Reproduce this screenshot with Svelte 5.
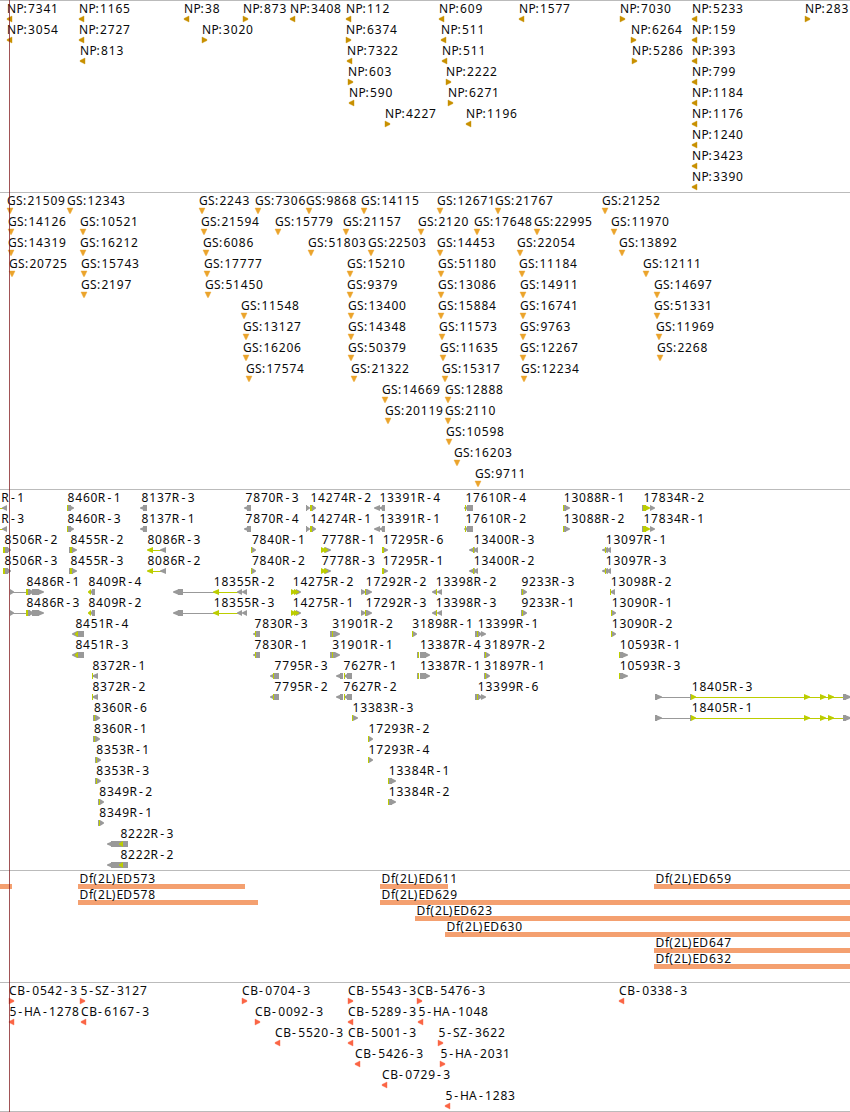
<script>
  const WIDTH = 850;
  const ROW = 21;

  const advance = {
    N: 9.4, P: 7.2, G: 9, S: 6.9, ':': 4.1, R: 8.1, D: 9.3, f: 4.3, '(': 4.5, ')': 4.6,
    L: 6.4, E: 6.8, C: 8.3, B: 7.2, H: 9, A: 8.2, Z: 7.2, '-': 7.4
  };

  function spread(text, x) {
    const xs = [];
    for (const ch of text) {
      xs.push((x + (ch === '-' ? 1.6 : /\d/.test(ch) ? 0.4 : 0)).toFixed(1));
      x += advance[ch] ?? 7.66;
    }
    return xs.join(' ');
  }

  // one string per row: "<label> <direction><x>"
  const parse = (prefix, rows) =>
    rows.flatMap((row, i) =>
      row.split(', ').map((item) => {
        const [name, pos] = item.split(' ');
        return { text: prefix + name, dir: pos[0], x: Number(pos.slice(1)), row: i };
      })
    );

  const np = parse('NP:', [
    '7341 <7, 1165 <79, 38 <184, 873 >243, 3408 <290, 112 <346, 609 <439, 1577 <519, 7030 >620, 5233 <692, 283 >805',
    '3054 <7, 2727 <79, 3020 >202, 6374 >346, 511 <441, 6264 >631, 159 <692',
    '813 <80, 7322 <347, 511 <442, 5286 >632, 393 <692',
    '603 >348, 2222 >446, 799 <692',
    '590 <349, 6271 >448, 1184 <692',
    '4227 >385, 1196 <466, 1176 <692',
    '1240 <692',
    '3423 <692',
    '3390 <692'
  ]);

  const gs = parse('GS:', [
    '21509 v7, 12343 v67, 2243 v199, 7306 v255, 9868 v306, 14115 v361, 12671 v437, 21767 v495, 21252 v602',
    '14126 v8, 10521 v80, 21594 v201, 15779 v275, 21157 v343, 2120 v418, 17648 v474, 22995 v534, 11970 v611',
    '14319 v8, 16212 v80, 6086 v203, 51803 v308, 22503 v368, 14453 v437, 22054 v517, 13892 v619',
    '20725 v9, 15743 v81, 17777 v204, 15210 v347, 51180 v438, 11184 v519, 12111 v643',
    '2197 v81, 51450 v205, 9379 v347, 13086 v438, 14911 v520, 14697 v654',
    '11548 v241, 13400 v348, 15884 v438, 16741 v520, 51331 v654',
    '13127 v243, 14348 v348, 11573 v439, 9763 v520, 11969 v656',
    '16206 v243, 50379 v348, 11635 v440, 12267 v520, 2268 v657',
    '17574 v246, 21322 v351, 15317 v442, 12234 v521',
    '14669 v382, 12888 v445',
    '20119 v385, 2110 v445',
    '10598 v446',
    '16203 v454',
    '9711 v475'
  ]);

  const cb = parse('', [
    'CB-0542-3 >9, 5-SZ-3127 >80, CB-0704-3 >242, CB-5543-3 >348, CB-5476-3 >417, CB-0338-3 <619',
    '5-HA-1278 <9, CB-6167-3 <81, CB-0092-3 >255, CB-5289-3 <348, 5-HA-1048 <418',
    'CB-5520-3 <275, CB-5001-3 <348, 5-SZ-3622 >438',
    'CB-5426-3 <355, 5-HA-2031 >440',
    'CB-0729-3 <382',
    '5-HA-1283 <445'
  ]);

  // [first row, labels, label x, parts]; a part is colour + kind + x:width
  const rnai = [
    [0, 'R-1 R-3', 1.3, 'y-0:3 g<2:5'],
    [0, '8460R-1 8460R-3', 67.2, 'y#67:1 g#68:3 g>69:5'],
    [0, '8137R-3 8137R-1', 141.2, 'g<140:6 g#143:4'],
    [0, '7870R-3 7870R-4', 245.2, 'g<244:6 g#247:4'],
    [0, '14274R-2 14274R-1', 310, 'g#306:1 g>306:4 y#310:2 g#312:1 g>312:4'],
    [0, '13391R-4 13391R-1', 379, 'g<374:6 g<379:6 g#382:3'],
    [0, '17610R-4 17610R-2', 465, 'g<464:6 g#467:6 y#465:1'],
    [0, '13088R-1 13088R-2', 563.3, 'g#564:2 g>565:5 y#563:1'],
    [0, '17834R-2 17834R-1', 643, 'g#642:1 y#643:3 y>645:5 g>650:5'],
    [2, '8506R-2 8506R-3', 4, 'y#3:2 g#5:3 g>7:4'],
    [2, '8455R-2 8455R-3', 70, 'g#69:4 y#70:2 g>72:5'],
    [2, '8086R-3 8086R-2', 147, 'y-152:9 y<147:6 g<160:6'],
    [2, '7840R-1 7840R-2', 251.5, 'y#251:1 g>252:4'],
    [2, '7778R-1 7778R-3', 321.4, 'g>325:6 y>324:4 y>321:5'],
    [2, '17295R-6 17295R-1', 382.3, 'g>383:5 y#382:2'],
    [2, '13400R-3 13400R-2', 473.3, 'g<469:6 g<473:5 y#473:1'],
    [2, '13097R-1 13097R-3', 605.3, 'g<602:6 g<606:5 y#605:1'],
    [4, '8486R-1 8486R-3', 26, 'g-10:17 g>10:4 g#28:2 g>29:5 g#32:7 g>38:6 y#26:2'],
    [4, '8409R-4 8409R-2', 88, 'g<89:6 g#92:3 y<88:3'],
    [4, '18355R-2 18355R-3', 213.3, 'g-178:36 y-214:25 g<173:6 g#178:5 y<213:6 g<237:5 g<242:5'],
    [4, '14275R-2 14275R-1', 292.3, 'g>296:5 y>291:5 y>294:5'],
    [4, '17292R-2 17292R-3', 365.4, 'g>361:5 g#365:2 g>367:5 y#365:1'],
    [4, '13398R-2 13398R-3', 435.3, 'g<432:5 g<437:5 y#436:1'],
    [4, '9233R-3 9233R-1', 521, 'g#521:2 g>523:4 y#522:1'],
    [4, '13098R-2', 610.3, 'g<610:5 y#610:1'],
    [5, '13090R-1 13090R-2', 611.3, 'g>612:4 y#611:1'],
    [6, '8451R-4 8451R-3', 75, 'g<72:5 g#77:7 y<75:3'],
    [6, '7830R-3 7830R-1', 254.2, 'g<253:6 g#256:4 y#255:1'],
    [6, '31901R-2 31901R-1', 331.8, 'g#330:3 g#333:2 g>335:5 y#332:1'],
    [6, '31898R-1', 411.8, 'g>413:4 y#412:1'],
    [6, '13399R-1', 477.4, 'g#475:4 g>478:4 g>481:5 y#477:1'],
    [7, '13387R-4 13387R-1', 419.5, 'g#417:2 g#420:6 g>425:5 y#418:1'],
    [7, '31897R-2 31897R-1', 483.8, 'g#484:2 g>486:4 y#485:1'],
    [7, '10593R-1 10593R-3', 619.3, 'g#620:3 g>622:6 y#619:1'],
    [8, '8372R-1 8372R-2', 92, 'g<92:6 y#92:1'],
    [8, '7795R-3 7795R-2', 274.2, 'g<270:5 g#274:5 y#273:1'],
    [8, '7627R-1 7627R-2', 343.2, 'g<336:6 g#340:3 g<344:5 g#347:5 y#344:1'],
    [9, '13399R-6', 477.4, 'g#475:4 g>478:4 g>481:5 y#477:1'],
    [9, '18405R-3 18405R-1', 691.3, 'g-660:31 y-692:152 g#655:2 g>656:6 g#690:1 y>691:5 y>804:6 y>820:6 y>828:6 g#843:3 g>845:6'],
    [10, '8360R-6 8360R-1', 93.6, 'g#93:3 g>96:4 y#94:1'],
    [10, '13383R-3', 352.2, 'g>353:5 y#352:1'],
    [11, '17293R-2 17293R-4', 368.2, 'g>369:4 y#368:1'],
    [12, '8353R-1 8353R-3', 95.8, 'g#95:2 g>97:4 y#96:1'],
    [13, '13384R-1 13384R-2', 388.4, 'g#389:3 g>391:5 y#388:1'],
    [14, '8349R-2 8349R-1', 98.8, 'g#98:1 g>100:4 y#99:1'],
    [16, '8222R-3 8222R-2', 120, 'g<107:6 g#111:17 y<119:4']
  ].flatMap(([first, labels, x, parts]) =>
    labels.split(' ').map((text, i) => ({
      text,
      x,
      row: first + i,
      parts: parts.split(' ').map((p) => {
        const [px, w] = p.slice(2).split(':').map(Number);
        return { color: p[0], kind: p[1], x: px, w };
      })
    }))
  );

  const deletions = [
    { text: '', x: 0, end: 12, row: 0 },
    { text: 'Df(2L)ED573', x: 78, end: 245, row: 0 },
    { text: 'Df(2L)ED611', x: 380, end: 448, row: 0 },
    { text: 'Df(2L)ED659', x: 654, end: 850, row: 0 },
    { text: 'Df(2L)ED578', x: 78, end: 258, row: 1 },
    { text: 'Df(2L)ED629', x: 380, end: 850, row: 1 },
    { text: 'Df(2L)ED623', x: 415, end: 850, row: 2 },
    { text: 'Df(2L)ED630', x: 445, end: 850, row: 3 },
    { text: 'Df(2L)ED647', x: 654, end: 850, row: 4 },
    { text: 'Df(2L)ED632', x: 654, end: 850, row: 5 }
  ];

  function shape(kind, x, y, w) {
    if (kind === '<') return `M${x} ${y + 2.5}v1L${x + w} ${y + 6}v-6Z`;
    if (kind === '>') return `M${x} ${y}L${x + w} ${y + 2.5}v1L${x} ${y + 6}Z`;
    if (kind === 'v') return `M${x} ${y}h${w}L${x + w / 2 + 0.4} ${y + 5.5}h-0.8Z`;
    if (kind === '-') return `M${x} ${y + 3}h${w}v1h${-w}Z`;
    return `M${x} ${y}h${w}v6h${-w}Z`;
  }
</script>

{#snippet label(text, x, y)}
  <text x={spread(text, x)} {y}>{text}</text>
{/snippet}

{#snippet insertions(items, name, height)}
  <section class="track {name}">
    <svg width={WIDTH} {height}>
      {#each items as item}
        {@render label(item.text, item.x, item.row * ROW + 12)}
        <path d={shape(item.dir, item.x, item.row * ROW + 15, item.dir === 'v' ? 6 : 5)} />
      {/each}
    </svg>
  </section>
{/snippet}

<main class="browser">
  {@render insertions(np, 'np', 191)}
  {@render insertions(gs, 'gs', 296)}

  <section class="track rnai">
    <svg width={WIDTH} height="380">
      {#each rnai as item}
        {@render label(item.text, item.x, item.row * ROW + 12)}
        {#each item.parts as part}
          <path class={part.color} d={shape(part.kind, part.x, item.row * ROW + 15, part.w)} />
        {/each}
      {/each}
    </svg>
  </section>

  <section class="track deletions">
    <svg width={WIDTH} height="111">
      {#each deletions as item}
        <rect x={item.x} y={item.row * 16 + 13} width={item.end - item.x} height="5" />
        {@render label(item.text, item.x + 1.6, item.row * 16 + 12)}
      {/each}
    </svg>
  </section>

  {@render insertions(cb, 'cb', 128)}
  <div class="cursor"></div>
</main>

<style>
  :global(body) {
    margin: 0;
    background: #fff;
  }

  .browser {
    position: relative;
    width: 850px;
    height: 1112px;
    box-sizing: border-box;
    overflow: hidden;
    background: #fff;
  }

  .track {
    border-top: 1px solid #bbb;
  }

  .track svg {
    display: block;
  }

  text {
    font-family: 'Noto Sans', sans-serif;
    font-size: 12px;
    fill: #0a0a0a;
  }

  .np path,
  .gs path,
  .cb path {
    stroke-width: 0.4px;
  }

  .np path { fill: #c89000; stroke: #c89000; }
  .gs path { fill: #eba42c; stroke: #eba42c; }
  .cb path { fill: #fb6545; stroke: #fb6545; }
  .cb { border-bottom: 1px solid #bbb; }

  .rnai .g { fill: #999; }
  .rnai .y { fill: #bccd00; }

  .deletions rect { fill: #f4a070; }

  .cursor {
    position: absolute;
    top: 0;
    bottom: 0;
    left: 9px;
    width: 1px;
    background: rgba(130, 25, 30, 0.75);
  }
</style>
